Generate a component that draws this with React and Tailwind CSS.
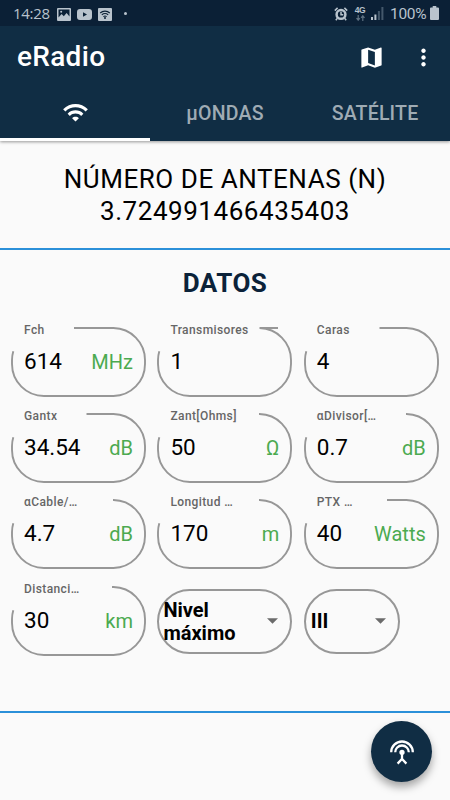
import React from "react";

const fields = [
  { label: "Fch", value: "614", unit: "MHz", notch: 63 },
  { label: "Transmisores", value: "1", notch: 121 },
  { label: "Caras", value: "4", notch: 75.5 },
  { label: "Gantx", value: "34.54", unit: "dB", notch: 75.5 },
  { label: "Zant[Ohms]", value: "50", unit: "Ω", notch: 102 },
  { label: "αDivisor[…", value: "0.7", unit: "dB", notch: 102 },
  { label: "αCable/…", value: "4.7", unit: "dB", notch: 102 },
  { label: "Longitud …", value: "170", unit: "m", notch: 102 },
  { label: "PTX …", value: "40", unit: "Watts", notch: 83 },
  { label: "Distanci…", value: "30", unit: "km", notch: 101 },
];

function StatusBar() {
  return (
    <div className="h-[26px] bg-[#0b2036] flex items-center justify-between pl-[13px] pr-[11px] text-[#b9c3cd]">
      <div className="flex items-center">
        <span className="w-9 text-[15px] leading-[26px] tracking-[-0.3px] font-['Open_Sans',sans-serif] whitespace-nowrap">14:28</span>
        <svg className="ml-2 mt-0.5" width="14" height="13" viewBox="0 0 14 13">
          <path fill="currentColor" fillRule="evenodd" d="M1 0h12a1 1 0 0 1 1 1v11a1 1 0 0 1-1 1H1a1 1 0 0 1-1-1V1a1 1 0 0 1 1-1zM1.5 1.5v8L4.6 6l2.2 2.2L9.6 5l2.9 3.6V1.5z" />
          <circle cx="4.2" cy="3.7" r="1" fill="currentColor" />
        </svg>
        <svg className="ml-1.5 mt-0.5" width="15" height="11" viewBox="0 0 15 11">
          <path fill="currentColor" fillRule="evenodd" d="M3 0h9a3 3 0 0 1 3 3v5a3 3 0 0 1-3 3H3a3 3 0 0 1-3-3V3a3 3 0 0 1 3-3zM6 3.2v4.6l4-2.3z" />
        </svg>
        <svg className="ml-1.5 mt-0.5" width="14" height="13" viewBox="0 0 14 13">
          <rect width="14" height="13" rx="1" fill="currentColor" />
          <g fill="none" stroke="#0b2036" strokeWidth="1.1">
            <path d="M2.2 5a7 7 0 0 1 9.6 0M3.8 6.9a4.7 4.7 0 0 1 6.4 0M5.4 8.7a2.4 2.4 0 0 1 3.2 0" />
          </g>
          <circle cx="7" cy="10" r="1" fill="#0b2036" />
        </svg>
        <span className="ml-3 w-[3px] h-[3px] rounded-full bg-[#b9c3cd]" />
      </div>
      <div className="flex items-center">
        <svg className="mt-px" width="14" height="14" viewBox="0 0 14 14">
          <circle cx="7" cy="7.4" r="4.4" fill="none" stroke="currentColor" strokeWidth="2.5" />
          <path d="M7 4.8v3h2.3M.8 3.6L3.6.9M13.2 3.6L10.4.9M3.4 11.3l-1.6 1.9M10.6 11.3l1.6 1.9" fill="none" stroke="currentColor" strokeWidth="1.5" />
        </svg>
        <div className="ml-1.5 w-[12px] flex flex-col items-center">
          <span className="text-[8.5px] leading-[8px] font-bold font-['Liberation_Sans',sans-serif] tracking-[-0.4px]">4G</span>
          <svg className="mt-px" width="9" height="6" viewBox="0 0 9 6" fill="none" stroke="#5f7182" strokeWidth="1.2">
            <path d="M2.2 0v5M.5 3.2l1.7 2 1.7-2M6.8 6V1M5.1 2.8l1.7-2 1.7 2" />
          </svg>
        </div>
        <svg className="ml-[5px] mt-px" width="13" height="13" viewBox="0 0 13 13">
          <path d="M0 10h2v3H0zM3.4 7.5h2V13h-2z" fill="currentColor" />
          <path d="M6.9 4h2v9h-2zM10.4 0h2v13h-2z" fill="#44586b" />
        </svg>
        <span className="ml-[6px] w-[37px] text-[15.5px] leading-[26px] tracking-[-0.3px] whitespace-nowrap mt-px">100%</span>
        <svg className="ml-[3px]" width="9" height="14" viewBox="0 0 9 14">
          <path fill="currentColor" d="M2.7 0h3.6v1.6H8a1 1 0 0 1 1 1V13a1 1 0 0 1-1 1H1a1 1 0 0 1-1-1V2.6a1 1 0 0 1 1-1h1.7z" />
        </svg>
      </div>
    </div>
  );
}

function Header() {
  return (
    <header className="bg-[#102d44] text-white shadow-[0_1px_3px_rgba(0,0,0,0.4)]">
      <StatusBar />
      <div className="h-[62px] flex items-center pl-[17px]">
        <h1 className="text-[28px] font-medium leading-[62px] tracking-[0.3px] flex-1">eRadio</h1>
        <svg className="w-[27px] h-[27px] mr-[25px]" viewBox="0 0 24 24" fill="currentColor">
          <path d="M20.5 3l-.16.03L15 5.1 9 3 3.36 4.9c-.21.07-.36.25-.36.48V20.5c0 .28.22.5.5.5l.16-.03L9 18.9l6 2.1 5.64-1.9c.21-.07.36-.25.36-.48V3.5c0-.28-.22-.5-.5-.5zM15 19l-6-2.11V5l6 2.11V19z" />
        </svg>
        <svg className="w-[27px] h-[27px] mr-[13px]" viewBox="0 0 24 24" fill="currentColor">
          <path d="M12 8c1.1 0 2-.9 2-2s-.9-2-2-2-2 .9-2 2 .9 2 2 2zm0 2c-1.1 0-2 .9-2 2s.9 2 2 2 2-.9 2-2-.9-2-2-2zm0 6c-1.1 0-2 .9-2 2s.9 2 2 2 2-.9 2-2-.9-2-2-2z" />
        </svg>
      </div>
      <nav className="h-[53px] grid grid-cols-3 text-[19.5px] tracking-[0.2px] font-medium text-[#9fabb4]">
        <div className="border-b-[3px] border-white flex items-center justify-center text-white">
          <svg className="w-[27px] h-[27px] -mt-0.5" viewBox="0 0 24 24" fill="currentColor">
            <path d="M1 9l2 2c4.97-4.97 13.03-4.97 18 0l2-2C16.93 2.93 7.08 2.93 1 9zm8 8l3 3 3-3c-1.65-1.66-4.34-1.66-6 0zm-4-4l2 2c2.76-2.76 7.24-2.76 10 0l2-2C15.14 9.14 8.87 9.14 5 13z" />
          </svg>
        </div>
        <div className="text-center leading-[52px]">µONDAS</div>
        <div className="text-center leading-[52px]">SATÉLITE</div>
      </nav>
    </header>
  );
}

function Field({ label, value, unit, notch }) {
  return (
    <div className="relative w-[135px] h-[70px] px-[13px]">
      <svg className="absolute left-0 top-0" width="135" height="70" viewBox="0 0 135 70" fill="none" stroke="#979797" strokeWidth="1.9">
        <path d={`M2.3 24.3A32 32 0 0 0 1 33V37A32 32 0 0 0 33 69H102.5A32 32 0 0 0 134 37V33A32 32 0 0 0 102.5 1H${notch}`} />
      </svg>
      <div className="h-[18px] -mt-1.5 mb-2.5 text-[12px] leading-[18px] font-medium tracking-[0.4px] text-[#666] whitespace-nowrap">{label}</div>
      <div className="flex justify-between">
        <span className="text-[22.5px] leading-6">{value}</span>
        {unit && <span className="text-[20px] leading-[27px] text-[#4caa50]">{unit}</span>}
      </div>
    </div>
  );
}

function Select({ className, children }) {
  return (
    <div className={`mt-[3px] h-[65px] rounded-[33px] border-2 border-[#979797] flex items-center justify-between pr-3 ${className}`}>
      <span className="pt-px text-[20px] leading-[23px] font-bold">{children}</span>
      <svg width="11" height="6" viewBox="0 0 12 6" className="shrink-0">
        <path d="M0 0h12L6 6z" fill="#6b6b6b" />
      </svg>
    </div>
  );
}

export default function App() {
  return (
    <div className="w-[450px] h-[800px] bg-[#fafafa] text-black font-[Roboto,sans-serif] flex flex-col overflow-hidden">
      <Header />
      <section className="h-[109px] pt-[23px] border-b-2 border-[#2b90d9] text-center text-[26px] leading-[31.5px] tracking-[0.55px]">
        <div>NÚMERO DE ANTENAS (N)</div>
        <div>3.724991466435403</div>
      </section>
      <section className="h-[463px] border-b-2 border-[#2b90d9]">
        <h2 className="h-[77px] text-center text-[26px] leading-[67px] tracking-[0.5px] font-bold text-[#0b2239]">DATOS</h2>
        <div className="pl-[11px] grid grid-cols-[135px_135px_135px] gap-x-[11.4px] gap-y-[16.2px]">
          {fields.map((f) => (
            <Field key={f.label} {...f} />
          ))}
          <Select className="w-[135px] pl-1">Nivel máximo</Select>
          <Select className="w-[96px] pl-[5px]">III</Select>
        </div>
      </section>
      <footer className="flex-1 flex justify-end pt-2 pr-[18px]">
        <button className="w-[61px] h-[61px] rounded-full bg-[#102d44] flex items-center justify-center shadow-[0_5px_9px_rgba(0,0,0,0.35)]">
          <svg width="26" height="26" viewBox="0 0 26 26" fill="none" stroke="white" strokeWidth="2.3">
            <path d="M2.2 13.3a10.8 10.8 0 0 1 21.6 0M6.2 13.3a6.8 6.8 0 0 1 13.6 0" />
            <path d="M13 13v7M8.6 24.6l4.4-4.6 4.4 4.6" />
            <circle cx="13" cy="13.3" r="1.5" fill="white" />
          </svg>
        </button>
      </footer>
    </div>
  );
}
